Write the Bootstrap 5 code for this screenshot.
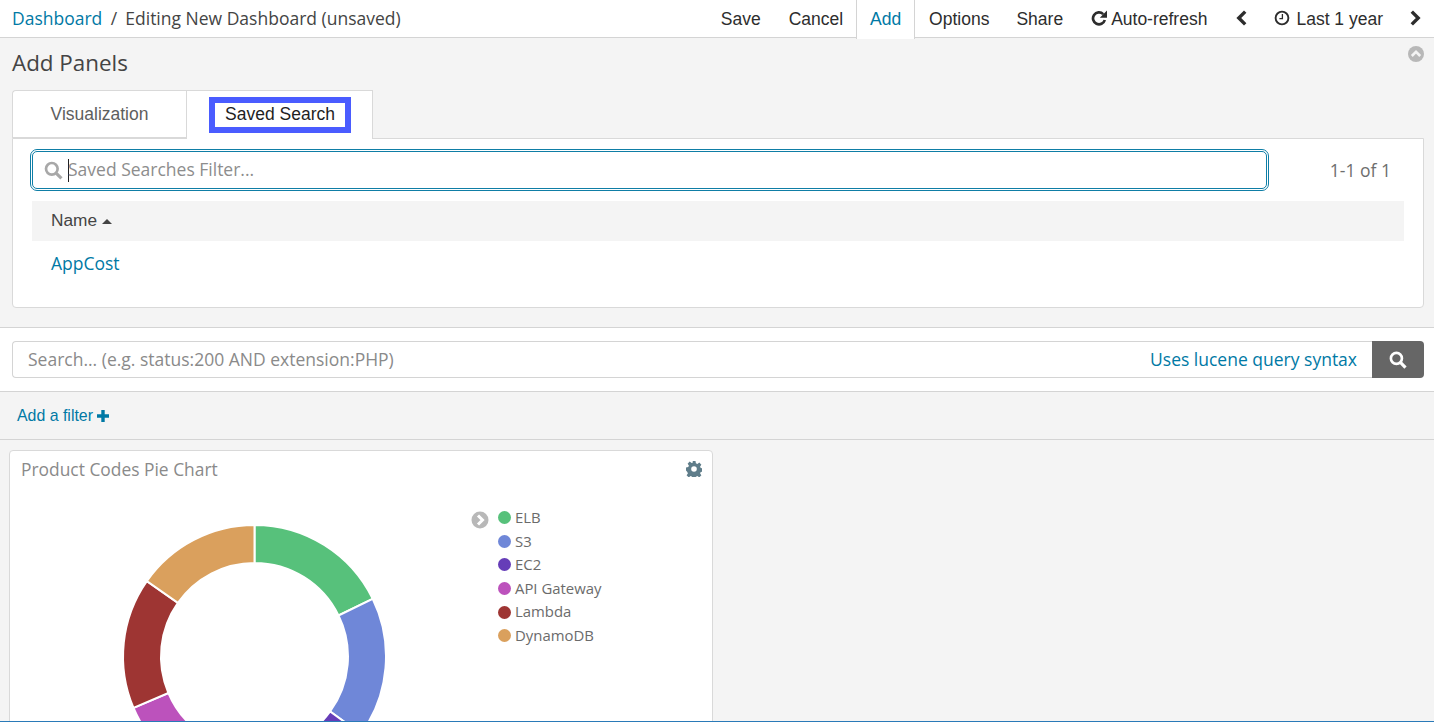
<!DOCTYPE html>
<html lang="en">
<head>
<meta charset="utf-8">
<title>Editing New Dashboard</title>
<link href="https://cdn.jsdelivr.net/npm/bootstrap@5.3.0/dist/css/bootstrap.min.css" rel="stylesheet">
<style>
html, body { height: 722px; overflow: hidden; }
body { background: #f4f4f4; font-family: "Open Sans", sans-serif; font-size: 17.5px; color: #5e5e5e; position: relative; }
a { text-decoration: none; }
.kb-top { height: 38px; background: #fff; border-bottom: 1px solid #d4d4d4; }
.kb-crumbs { padding-left: 12px; line-height: 36px; color: #444; }
.kb-crumbs a { color: #0079a5; }
.kb-crumbs i { font-style: normal; margin: 0 8px 0 4px; }
.kb-menu { font-family: "Liberation Sans", sans-serif; font-size: 17.5px; color: #2d2d2d; }
.kb-item { height: 38px; line-height: 37px; padding: 0 14px; color: #2d2d2d; display: flex; align-items: center; gap: 4px; }
.kb-item svg { margin-bottom: 2px; }
.kb-item-cancel { padding-right: 13px; }
.kb-item-share { padding-left: 13px; }
.kb-item-refresh { padding-left: 14px; }
.kb-item-clock { padding-left: 13px; gap: 6px; padding-right: 14px; }
.kb-item-next { padding-left: 13px; padding-right: 12px; }
.kb-item.kb-on { background: #fff; color: #0079a5; border-left: 1px solid #d4d4d4; border-right: 1px solid #d4d4d4; height: 39px; margin-bottom: -1px; width: 59px; padding: 0; justify-content: center; }
.kb-config { height: 290px; border-bottom: 1px solid #d4d4d4; padding: 0 10px 0 12px; }
.kb-titlerow { height: 52px; }
.kb-title { font-size: 22.4px; line-height: 30px; padding-top: 10px; color: #444; margin: 0; font-weight: 400; }
.kb-collapse { margin-top: 8px; }
.kb-tabs { display: flex; height: 49px; margin-bottom: -1px; position: relative; font-family: "Liberation Sans", sans-serif; font-size: 17.5px; }
.kb-tab { border: 1px solid #d9d9d9; background: #fff; display: flex; align-items: center; justify-content: center; }
.kb-tab-a { width: 174px; border-right: 0; border-radius: 4px 0 0 0; color: #5e5e5e; height: 48px; }
.kb-tab-b { width: 187px; border-bottom: 0; height: 49px; padding-bottom: 1px; padding-left: 1px; }
.kb-focus { border: 6px solid #4a5cff; color: #1f1f1f; width: 142px; height: 36px; display: flex; align-items: center; justify-content: center; }
.kb-panel { background: #fff; border: 1px solid #d9d9d9; border-radius: 0 0 4px 4px; height: 170px; padding: 12px 19px 0; }
.kb-filter-row { display: flex; align-items: center; height: 38px; }
.kb-filter { width: 1235px; height: 38px; border: 1px solid #0f7ea6; outline: 1px solid #0f7ea6; outline-offset: 1px; border-radius: 5px; display: flex; align-items: center; color: #8d8d8d; padding-left: 11px; background: #fff; }
.kb-filter-text { margin-left: -1px; padding-bottom: 2px; }
.kb-caret { width: 1px; height: 23px; background: #222; margin-left: 5px; }
.kb-count { flex: 1; text-align: right; padding-right: 13px; color: #6e6e6e; }
.kb-head { margin-top: 12px; height: 40px; background: #f4f4f4; padding-left: 19px; font-family: "Liberation Sans", sans-serif; font-size: 17.3px; color: #444; display: flex; align-items: center; gap: 5px; }
.kb-sort { width: 0; height: 0; border-left: 5px solid transparent; border-right: 5px solid transparent; border-bottom: 5px solid #444; }
.kb-cell { padding: 10px 0 0 19px; line-height: 24px; }
.kb-cell a { color: #0079a5; }
.kb-query { height: 64px; background: #fff; border-bottom: 1px solid #d4d4d4; padding: 13px 10px 0 12px; display: flex; }
.kb-qinput { flex: 1; height: 37px; border: 1px solid #d4d4d4; border-right: 0; border-radius: 4px 0 0 4px; display: flex; justify-content: space-between; align-items: center; color: #8a8a8a; padding: 0 15px 0 15px; }
.kb-qinput a { color: #0079a5; }
.kb-qbtn { width: 52px; height: 37px; background: #666; border-radius: 0 4px 4px 0; display: flex; align-items: center; justify-content: center; }
.kb-filterbar { height: 48px; border-bottom: 1px solid #d4d4d4; padding-left: 17px; display: flex; align-items: center; gap: 4px; font-family: "Liberation Sans", sans-serif; font-size: 15.9px; }
.kb-filterbar a { color: #0079a5; }
.kb-board { padding: 10px 0 0 9px; }
.kb-vis { width: 704px; height: 272px; background: #fff; border: 1px solid #d9d9d9; border-radius: 4px 4px 0 0; overflow: hidden; }
.kb-vis-head { height: 30px; padding: 6px 10px 0 11px; line-height: 24px; color: #8a8a8a; font-size: 17.4px; }
.kb-gear { margin-top: 4px; }
.kb-pie { display: block; flex: none; }
.kb-toggle { margin: 30px 0 0 31px; flex: none; }
.kb-legend { margin: 25px 0 0 9px; font-size: 14.9px; line-height: 23.6px; list-style: none; padding: 0; color: #6b6b6b; }
.kb-legend li { display: flex; align-items: center; gap: 4px; }
.kb-dot { width: 13px; height: 13px; border-radius: 50%; display: inline-block; }
.kb-bottom { position: absolute; left: 0; right: 0; bottom: 0; height: 1px; background: #2a7ab8; }
</style>
</head>
<body>
<nav class="kb-top d-flex justify-content-between">
  <div class="kb-crumbs"><a href="#">Dashboard</a> <i>/</i>Editing New Dashboard (unsaved)</div>
  <div class="kb-menu d-flex">
    <a class="kb-item" href="#">Save</a>
    <a class="kb-item kb-item-cancel" href="#">Cancel</a>
    <a class="kb-item kb-on" href="#">Add</a>
    <a class="kb-item" href="#">Options</a>
    <a class="kb-item kb-item-share" href="#">Share</a>
    <a class="kb-item kb-item-refresh" href="#"><svg width="16" height="16" viewBox="0 0 16 16"><path d="M13.800 10A6 6 0 1 1 12.200 4.100" fill="none" stroke="#2d2d2d" stroke-width="2.700"/><path d="M16 .6V7.800H8.800Z" fill="#2d2d2d"/></svg>Auto-refresh</a>
    <a class="kb-item" href="#"><svg width="12" height="16" viewBox="0 0 12 16"><path d="M10.200 1.600 3.800 8l6.400 6.400" fill="none" stroke="#2d2d2d" stroke-width="3.400"/></svg></a>
    <a class="kb-item kb-item-clock" href="#"><svg width="16" height="16" viewBox="0 0 16 16"><circle cx="8" cy="8" r="6.400" fill="none" stroke="#2d2d2d" stroke-width="1.900"/><path d="M8.400 4v4.600H5.400" fill="none" stroke="#2d2d2d" stroke-width="1.300"/></svg>Last 1 year</a>
    <a class="kb-item kb-item-next" href="#"><svg width="12" height="16" viewBox="0 0 12 16"><path d="M1.800 1.600 8.200 8l-6.400 6.400" fill="none" stroke="#2d2d2d" stroke-width="3.400"/></svg></a>
  </div>
</nav>

<section class="kb-config">
  <div class="kb-titlerow d-flex justify-content-between align-items-start">
    <h1 class="kb-title">Add Panels</h1>
    <svg class="kb-collapse" width="16" height="16" viewBox="0 0 16 16"><circle cx="8" cy="8" r="8" fill="#b8b8b8"/><path d="M3.800 10 8 5.800 12.200 10" fill="none" stroke="#f4f4f4" stroke-width="2.600"/></svg>
  </div>
  <div class="kb-tabs">
    <div class="kb-tab kb-tab-a">Visualization</div>
    <div class="kb-tab kb-tab-b"><div class="kb-focus">Saved Search</div></div>
  </div>
  <div class="kb-panel">
    <div class="kb-filter-row">
      <div class="kb-filter">
        <svg width="19" height="19" viewBox="0 0 17 17"><circle cx="7" cy="7" r="5.200" fill="none" stroke="#a8a8a8" stroke-width="2.400"/><path d="M11 11l4.600 4.600" stroke="#a8a8a8" stroke-width="2.800"/></svg>
        <span class="kb-caret"></span><span class="kb-filter-text">Saved Searches Filter...</span>
      </div>
      <div class="kb-count">1-1 of 1</div>
    </div>
    <div class="kb-head">Name <span class="kb-sort"></span></div>
    <div class="kb-cell"><a href="#">AppCost</a></div>
  </div>
</section>

<section class="kb-query">
  <div class="kb-qinput"><span>Search... (e.g. status:200 AND extension:PHP)</span><a href="#">Uses lucene query syntax</a></div>
  <button class="kb-qbtn border-0" type="button" aria-label="Search"><svg width="18" height="18" viewBox="0 0 17 17"><circle cx="7" cy="7" r="5.200" fill="none" stroke="#fff" stroke-width="2.500"/><path d="M11 11l4.600 4.600" stroke="#fff" stroke-width="3"/></svg></button>
</section>

<div class="kb-filterbar"><a href="#">Add a filter</a><svg width="12" height="12" viewBox="0 0 12 12"><path d="M4.300 0h3.400v4.300H12v3.400H7.700V12H4.300V7.700H0V4.300h4.300Z" fill="#0079a5"/></svg></div>

<main class="kb-board">
  <div class="kb-vis">
    <div class="kb-vis-head d-flex justify-content-between align-items-start">
      <span>Product Codes Pie Chart</span>
      <svg class="kb-gear" width="16" height="16" viewBox="0 0 16 16"><path fill="#5f7d8a" d="M6.500 0h3l.4 2.300 1.500.6 1.900-1.300 2.100 2.100-1.300 1.900.6 1.500 2.300.4v3l-2.300.4-.6 1.500 1.300 1.900-2.100 2.100-1.900-1.300-1.500.6-.4 2.300h-3l-.4-2.300-1.500-.6-1.900 1.300-2.100-2.100 1.300-1.900-.6-1.500L0 9.500v-3l2.300-.4.6-1.500-1.300-1.900 2.100-2.100 1.900 1.300 1.500-.6Z"/><circle cx="8" cy="8" r="2.800" fill="#fff"/></svg>
    </div>
    <div class="d-flex align-items-start">
      <svg class="kb-pie" width="430" height="241" viewBox="10 481 430 241" stroke="#fff" stroke-width="2">
        <path fill="#57c17b" d="M254.500 525A131.500 131.500 0 0 1 372.700 598.900L338.500 615.500A93.500 93.500 0 0 0 254.500 563Z"/>
        <path fill="#6f87d8" d="M372.700 598.900A131.500 131.500 0 0 1 360.900 733.800L330.100 711.500A93.500 93.500 0 0 0 338.500 615.500Z"/>
        <path fill="#663db8" d="M360.900 733.800A131.500 131.500 0 0 1 238.500 787L243.100 749.300A93.500 93.500 0 0 0 330.100 711.500Z"/>
        <path fill="#bc52bc" d="M238.500 787A131.500 131.500 0 0 1 133.500 707.900L168.400 693A93.500 93.500 0 0 0 243.100 749.300Z"/>
        <path fill="#9e3533" d="M133.500 707.900A131.500 131.500 0 0 1 146.800 581.100L177.900 602.900A93.500 93.500 0 0 0 168.400 693Z"/>
        <path fill="#daa05d" d="M146.800 581.100A131.500 131.500 0 0 1 254.500 525V563A93.500 93.500 0 0 0 177.900 602.900Z"/>
      </svg>
      <svg class="kb-toggle" width="18" height="18" viewBox="0 0 18 18"><circle cx="9" cy="9" r="8.500" fill="#b8b8b8"/><path d="M7 4.500 11.500 9 7 13.500" fill="none" stroke="#fff" stroke-width="3"/></svg>
      <ul class="kb-legend">
        <li><span class="kb-dot" style="background:#57c17b"></span>ELB</li>
        <li><span class="kb-dot" style="background:#6f87d8"></span>S3</li>
        <li><span class="kb-dot" style="background:#663db8"></span>EC2</li>
        <li><span class="kb-dot" style="background:#bc52bc"></span>API Gateway</li>
        <li><span class="kb-dot" style="background:#9e3533"></span>Lambda</li>
        <li><span class="kb-dot" style="background:#daa05d"></span>DynamoDB</li>
      </ul>
    </div>
  </div>
</main>
<div class="kb-bottom"></div>
<script src="https://cdn.jsdelivr.net/npm/bootstrap@5.3.0/dist/js/bootstrap.bundle.min.js"></script>
</body>
</html>
